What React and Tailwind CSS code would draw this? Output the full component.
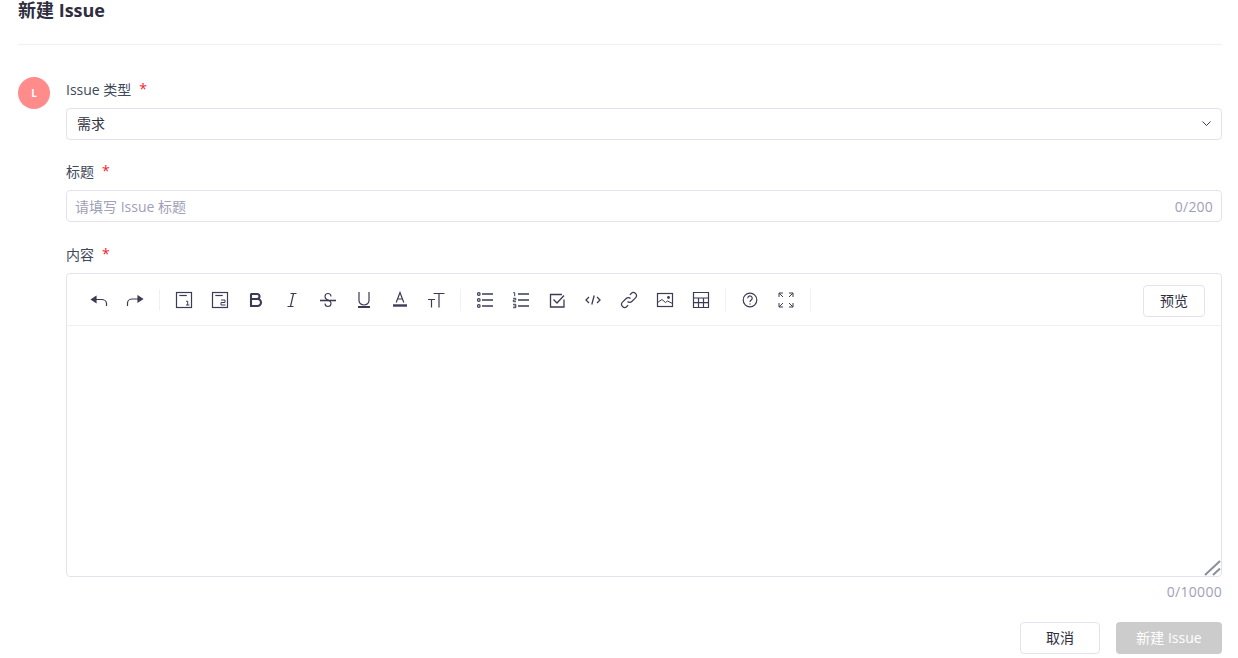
const Icon = ({ children, size = 18 }) => (
  <svg
    width={size}
    height={size}
    viewBox="0 0 18 18"
    fill="none"
    stroke="#3b3b55"
    strokeWidth="1.200"
    className="block"
  >
    {children}
  </svg>
);

const tools = [
  [
    ['undo', <><path d="M6 5.500 1.500 8.500 6 11.500Z" fill="#3b3b55" /><path d="M5 8.500h6.500a5 4 0 0 1 5 4v2.500" /></>],
    ['redo', <><path d="M12 5 16.500 8 12 11Z" fill="#3b3b55" /><path d="M13 8H6.500a5 4 0 0 0-5 4v3" /></>],
  ],
  [
    ['h1', <><rect x="1.500" y="1.500" width="15" height="15" /><path d="M4.300 4.500h7.500" /><path d="M11 10.300h1.700v3.700M11 14h3.400" strokeWidth="1" /></>],
    ['h2', <><rect x="1.500" y="1.500" width="15" height="15" /><path d="M4.300 4.500h7.500" /><path d="M10 9h4v2.500h-4V14h4.500" strokeWidth="1" /></>],
    ['bold', <path d="M4 3v12h6.500a3.500 3.500 0 0 0 0-7H4M10 8a2.500 2.500 0 0 0 0-5H3.500" strokeWidth="2.100" />],
    ['italic', <path d="M7.500 2.500h6M4.500 15.500h6M10.500 2.500l-3 13" />],
    ['strike', <><path d="M1 9.500h16" strokeWidth="1.600" /><path d="M12 5.500a3 3 0 0 0-6 0c0 2 1.300 3 3 3.500 1.700.5 3 1.500 3 3.500a3 3 0 0 1-6 0" strokeWidth="1.100" /></>],
    ['underline', <><path d="M4 1v8.500a5 4.500 0 0 0 10 0V1" /><path d="M3 16h12" strokeWidth="2" /></>],
    ['color', <><path d="M5.200 11.500 9 1.500l3.800 10M6.500 8h5" /><path d="M2 14.500h14" strokeWidth="2.400" /></>],
    ['size', <path d="M6.500 2.500h11M12 2.500v14M1 8.500h7M4.500 8.500v8" />],
  ],
  [
    ['ul', <><path d="M6 3h11M6 9h11M6 15h11" strokeWidth="1.400" /><circle cx="2.800" cy="3" r="1.300" /><circle cx="2.800" cy="9" r="1.300" /><circle cx="2.800" cy="15" r="1.300" /></>],
    ['ol', <><path d="M6 3h11M6 9h11M6 15h11" strokeWidth="1.400" /><path d="M1.200 1.700h1.500v3.500M1 7.300h2.800v1.700H1.300v1.700h2.700M1 13.300h2.800v3.400H1M1.500 15H4" strokeWidth="1" /></>],
    ['check', <path d="M16 8.500V16H2.500V3.500h11.500M5.500 8.500 9 12l7-7.500" strokeWidth="1.300" />],
    ['code', <path d="M5 6 2 9l3 3M13 6l3 3-3 3M10.200 4.500l-2.400 9" strokeWidth="1.300" />],
    ['link', <path d="M7.500 10.500a3 3 0 0 0 4.300 0l3.700-3.700a3 3 0 0 0-4.300-4.300L9.800 3.900M10.500 7.500a3 3 0 0 0-4.300 0l-3.700 3.700a3 3 0 0 0 4.300 4.300l1.400-1.400" />],
    ['image', <><rect x="1.500" y="2.500" width="15" height="13" /><path d="M1.500 11.500 6 8.500l3.500 3 2-1.500 5 2.500" strokeWidth="1" /><circle cx="12.500" cy="6.500" r=".8" fill="#3b3b55" /></>],
    ['table', <path d="M1.500 1.500h15v15h-15zM1.500 7h15M1.500 11.700h15M6.500 7v9.500M11.500 7v9.500" />],
  ],
  [
    ['help', <><circle cx="9" cy="9" r="6.800" /><path d="M6.800 7.200a2.200 2.200 0 1 1 3.400 1.800q-1.200.7-1.200 2" /><path d="M9 12.400v1.200" /></>],
    ['fullscreen', <path d="M2 6V2h4M2 2l4 4M12 2h4v4M16 2l-4 4M2 12v4h4M2 16l4-4M16 12v4h-4M16 16l-4-4" strokeWidth="1" />],
  ],
];

const Label = ({ text, className }) => (
  <div className={`flex items-center h-6 text-sm text-[#40485b] ${className}`}>
    <span className="pt-px">{text}</span>
    <span className="ml-2 text-[#f5222d] font-normal">*</span>
  </div>
);

export default function App() {
  return (
    <div
      className="min-h-[658px] bg-white pl-[18px] pr-4 overflow-hidden"
      style={{ fontFamily: '"Open Sans", "Noto Sans CJK SC", sans-serif' }}
    >
      <div className="h-[45px] border-b border-[#f0f0f5]">
        <h1 className="text-lg leading-5 font-bold text-[#2e2e3e]">新建 Issue</h1>
      </div>

      <div className="flex gap-4 mt-8">
        <div className="flex items-center justify-center w-8 h-8 rounded-full bg-[#ff8b8b] text-white text-[10px] font-bold shrink-0">
          L
        </div>

        <div className="flex-1 min-w-0">
          <Label text="Issue 类型" className="mb-[7px]" />
          <div className="flex items-center justify-between h-8 pl-2.5 pr-2.5 rounded border border-[#e3e3ef] text-sm text-[#2e2e3e]">
            <span>需求</span>
            <svg width="9" height="6" viewBox="0 0 9 6" fill="none" stroke="#3b3b55" strokeWidth="1">
              <path d="M.5.500 4.500 4.500 8.500.5" />
            </svg>
          </div>

          <Label text="标题" className="mt-[19px] mb-[7px]" />
          <div className="flex items-center h-8 pr-2 rounded border border-[#e3e3ef] text-sm">
            <input
              placeholder="请填写 Issue 标题"
              className="flex-1 min-w-0 pl-2 pt-0.5 outline-none bg-transparent placeholder:text-[#a0a0b8]"
            />
            <span className="pt-0.5 tracking-[0.2px] text-[#a0a0b8]">0/200</span>
          </div>

          <Label text="内容" className="mt-5 mb-[7px]" />
          <div className="relative h-[304px] rounded border border-[#e3e3ef]">
            <div className="flex items-center justify-between h-[52px] pl-3.5 pr-4 border-b border-[#f0f0f5]">
              <div className="flex items-center">
                {tools.map((group, i) => (
                  <div key={i} className="flex items-center">
                    {group.map(([name, shape]) => (
                      <div key={name} className="flex items-center justify-center w-9 h-9">
                        <Icon>{shape}</Icon>
                      </div>
                    ))}
                    <div className="w-px h-[22px] mx-1.5 bg-[#f0f0f5]" />
                  </div>
                ))}
              </div>
              <button className="w-[62px] h-8 mt-[3px] rounded border border-[#e3e3ef] bg-white text-sm text-[#2e2e3e]">
                预览
              </button>
            </div>
            <svg className="absolute right-0 bottom-0" width="18" height="18" viewBox="0 0 18 18" fill="none" stroke="#8a8f9c">
              <path d="M2 17 17 3" strokeWidth="2" />
              <path d="M10 17l7-6.500" strokeWidth="2" />
            </svg>
          </div>
          <div className="mt-[5px] text-right text-sm leading-5 tracking-[0.3px] text-[#a0a0b8]">0/10000</div>

          <div className="flex justify-end gap-4 mt-5">
            <button className="w-20 h-8 rounded border border-[#e3e3ef] bg-white text-sm text-[#2e2e3e]">
              取消
            </button>
            <button className="w-[106px] h-8 rounded bg-[#cccccc] text-sm text-white">
              新建 Issue
            </button>
          </div>
        </div>
      </div>
    </div>
  );
}
